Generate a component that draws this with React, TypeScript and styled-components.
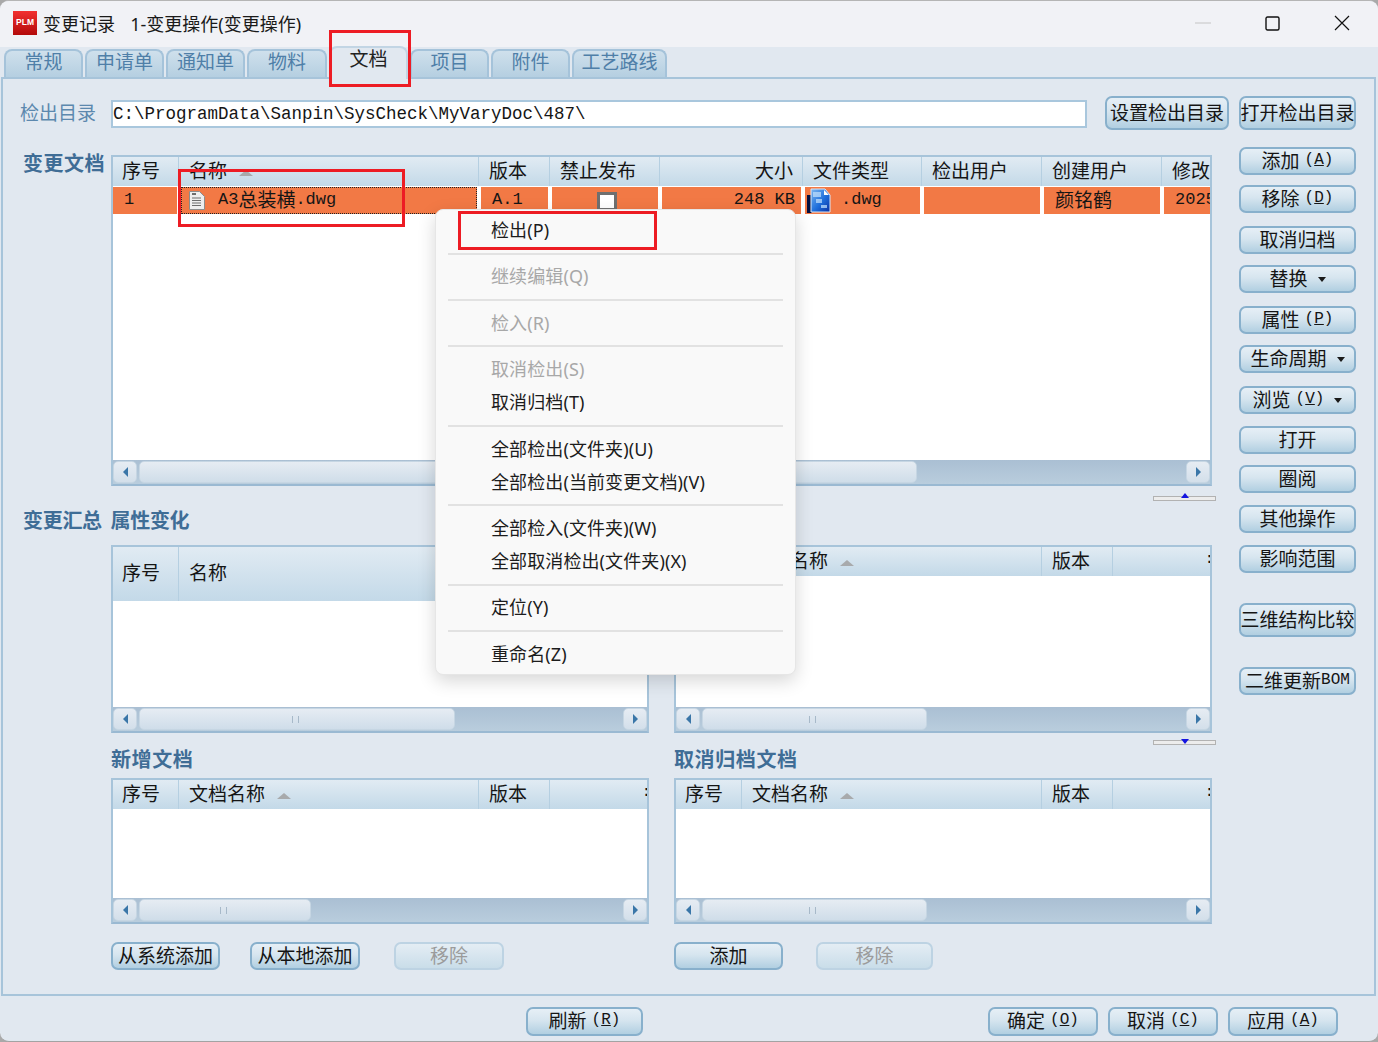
import React from "react";
import styled, { createGlobalStyle, css } from "styled-components";

const Global = createGlobalStyle`
  html, body { margin: 0; padding: 0; background: #a9a9a9; }
  * { box-sizing: border-box; }
  #root { width: 1378px; height: 1042px; overflow: hidden; }
`;

const UI = `"Liberation Mono", "Noto Sans CJK SC", monospace`;
const SANS = `"Noto Sans", "Noto Sans CJK SC", sans-serif`;

const Win = styled.div`
  position: relative;
  width: 1378px;
  height: 1042px;
  background: #e1e8f0;
  border-radius: 9px;
  border-top: 1px solid #b5b5b5;
  border-bottom: 1px solid #a3a3a3;
  overflow: hidden;
  font-family: ${UI};
  font-size: 19px;
  color: #151515;
`;

const TitleBar = styled.div`
  height: 46px;
  background: #f1f2f6;
  display: flex;
  align-items: center;
  padding: 0 0 2px 13px;
  font-family: ${SANS};
  font-size: 18px;
  color: #1a1a1a;
`;
const Logo = styled.div`
  width: 24px;
  height: 24px;
  background: linear-gradient(#f23030, #b30a0a);
  color: #fff;
  font-family: "Liberation Sans", sans-serif;
  font-weight: 700;
  font-size: 8.5px;
  line-height: 22px;
  text-align: center;
  margin-right: 6px;
`;
const TitleText = styled.span`
  white-space: pre;
  letter-spacing: 0;
  word-spacing: 0.4px;
`;
const WinControls = styled.div`
  margin-left: auto;
  display: flex;
  align-items: center;
  width: 183px;
  gap: 54px;
`;

const TabBar = styled.div`
  height: 30px;
  display: flex;
  align-items: flex-end;
  padding-left: 4px;
  gap: 2px;
`;
const Tab = styled.div<{ $w: number; $active?: boolean }>`
  width: ${(p) => p.$w}px;
  height: 28px;
  border: 2px solid #a5c3da;
  border-bottom: none;
  border-radius: 8px 8px 0 0;
  background: linear-gradient(#cfe0ec, #b5cfe1);
  color: #4f7fa8;
  text-align: center;
  line-height: 27px;
  ${(p) =>
    p.$active &&
    css`
      height: 33px;
      line-height: 27px;
      margin-bottom: -2px;
      background: #e1e8f0;
      border-color: #c2d5e4;
      color: #222;
      position: relative;
      z-index: 1;
    `}
`;

const Panel = styled.div`
  height: 919px;
  margin: 0 2px 0 1px;
  border: 2px solid #a7c4da;
  padding: 17px 0 0 17px;
  background: #e1e8f0;
`;
const DirRow = styled.div`
  display: flex;
  align-items: center;
  height: 34px;
`;
const DirLabel = styled.div`
  width: 91px;
  color: #5c88ae;
  padding-bottom: 2px;
`;
const DirInput = styled.div`
  width: 976px;
  height: 28px;
  margin: 1px 18px 0 0;
  background: #fff;
  border: 2px solid #a9c7dd;
  font-size: 17.5px;
  line-height: 24px;
  white-space: nowrap;
  overflow: hidden;
`;

const Body = styled.div`
  display: flex;
  margin-top: 17px;
`;
const LeftCol = styled.div`
  width: 1196px;
  display: flex;
  flex-direction: column;
`;
const RightCol = styled.div`
  margin-left: 23px;
  width: 117px;
  display: flex;
  flex-direction: column;
`;

const Btn = styled.div<{ $w?: number; $h?: number; $mt?: number; $off?: boolean; $ml?: number }>`
  flex: none;
  width: ${(p) => (p.$w ? `${p.$w}px` : "100%")};
  height: ${(p) => p.$h ?? 28}px;
  margin-top: ${(p) => p.$mt ?? 0}px;
  margin-left: ${(p) => p.$ml ?? 0}px;
  padding-bottom: 3px;
  border: 2px solid ${(p) => (p.$off ? "#bdd3e3" : "#88b0cc")};
  border-radius: 7px;
  background: ${(p) =>
    p.$off ? "linear-gradient(#e4edf4, #c9dde9)" : "linear-gradient(#e6eff6 0%, #d6e5ef 45%, #b1cfe1 100%)"};
  color: ${(p) => (p.$off ? "#9b9b9b" : "#151515")};
  display: flex;
  align-items: center;
  justify-content: center;
  white-space: nowrap;
  overflow: hidden;
`;
const Lat = styled.span<{ $s?: number }>`
  font-size: ${(p) => p.$s ?? 17}px;
`;
const BtnKey = styled.span`
  font-size: 16px;
  margin-left: 5px;
`;
const Caret = styled.span`
  display: inline-block;
  width: 0;
  height: 0;
  margin: 3px 0 0 10px;
  border: 4.5px solid transparent;
  border-top: 5px solid #1a1a1a;
  border-bottom: none;
`;

const SideLabel = styled.div`
  width: 91px;
  flex: none;
  padding-left: 3px;
  font-weight: 700;
  font-size: 20px;
  line-height: 22px;
  letter-spacing: 0.5px;
  color: #3f6d96;
  white-space: nowrap;
`;
const TopRow = styled.div`
  display: flex;
  margin-top: 8px;
`;
const Splitter = styled.div<{ $mt: number; $down?: boolean }>`
  position: relative;
  align-self: flex-end;
  width: 63px;
  height: 5px;
  margin-top: ${(p) => p.$mt}px;
  background: #ececec;
  border: 1px solid #b2b2b2;
  &::after {
    content: "";
    position: absolute;
    left: 27px;
    ${(p) =>
      p.$down
        ? css`
            top: -2px;
            border-top: 5px solid #1414e0;
          `
        : css`
            top: -4px;
            border-bottom: 5px solid #1414e0;
          `}
    border-left: 4px solid transparent;
    border-right: 4px solid transparent;
  }
`;
const HeadLine = styled.div`
  margin-top: 12px;
  height: 20px;
  line-height: 20px;
  padding-left: 3px;
  font-weight: 700;
  font-size: 20px;
  letter-spacing: -0.3px;
  word-spacing: -3px;
  color: #3f6d96;
`;
const PairRow = styled.div<{ $mt: number }>`
  display: flex;
  gap: 25px;
  margin-top: ${(p) => p.$mt}px;
  padding-left: 91px;
`;
const PairCol = styled.div`
  width: 538px;
  display: flex;
  flex-direction: column;
`;
const ColTitle = styled.div`
  height: 20px;
  line-height: 20px;
  font-weight: 700;
  font-size: 20px;
  letter-spacing: 0.6px;
  color: #3f6d96;
  margin-top: 7px;
  margin-bottom: 6px;
  white-space: nowrap;
`;
const BtnRow = styled.div`
  display: flex;
  margin-top: 18px;
`;

const TableBox = styled.div<{ $w: number; $h: number }>`
  width: ${(p) => p.$w}px;
  height: ${(p) => p.$h}px;
  flex: none;
  display: flex;
  flex-direction: column;
  background: #fff;
  border: 2px solid #a7c4da;
  border-bottom-color: #9ab9d2;
`;
const HeaderRow = styled.div<{ $cols: string; $h: number }>`
  flex: none;
  height: ${(p) => p.$h}px;
  display: grid;
  grid-template-columns: ${(p) => p.$cols};
  background: linear-gradient(#e1ebf3, #c3d9e8);
`;
const HeaderCell = styled.div<{ $right?: boolean }>`
  display: flex;
  align-items: center;
  justify-content: ${(p) => (p.$right ? "flex-end" : "flex-start")};
  padding: ${(p) => (p.$right ? "0 9px 4px 0" : "0 0 4px 10px")};
  border-right: 1px solid #b5cfe1;
  overflow: hidden;
  white-space: nowrap;
  &:first-child {
    padding-left: 9px;
  }
  &:last-child {
    border-right: none;
  }
`;
const SortMark = styled.span`
  width: 0;
  height: 0;
  margin-left: 12px;
  margin-top: 7px;
  border-left: 7px solid transparent;
  border-right: 7px solid transparent;
  border-bottom: 6px solid #a8aaac;
`;
const EndMark = styled.span`
  margin-left: auto;
  margin-right: -4px;
  font-size: 15px;
  font-weight: 700;
`;
const TableBody = styled.div`
  flex: 1;
  min-height: 0;
  background: #fff;
`;
const DataRow = styled.div<{ $cols: string }>`
  display: grid;
  grid-template-columns: ${(p) => p.$cols};
  height: 29px;
  padding-top: 1px;
`;
const DataCell = styled.div<{ $right?: boolean; $focus?: boolean }>`
  height: 27px;
  margin: 0 2px;
  background: #f27945;
  display: flex;
  align-items: center;
  justify-content: ${(p) => (p.$right ? "flex-end" : "flex-start")};
  padding: ${(p) => (p.$right ? "0 6px 3px 0" : "0 0 3px 11px")};
  overflow: hidden;
  white-space: nowrap;
  ${(p) =>
    p.$focus &&
    css`
      outline: 1px dotted #222;
      outline-offset: -1px;
    `}
  &:first-child {
    margin-left: 0;
  }
  &:last-child {
    margin-right: 0;
  }
`;
const CheckBox = styled.div`
  width: 20px;
  height: 19px;
  margin: 5px 0 0 34px;
  background: #fff;
  border: 3px solid #6f6f6f;
`;
const IconGap = styled.span<{ $w: number; $ml: number }>`
  display: inline-flex;
  flex: none;
  margin: 3px 0 0 ${(p) => p.$ml}px;
  width: ${(p) => p.$w}px;
`;

const ScrollBar = styled.div`
  flex: none;
  height: 24px;
  display: flex;
  padding: 1px 0;
  background: linear-gradient(#aabfd3, #b9cddd);
  align-items: stretch;
`;
const ScrollArrow = styled.div<{ $right?: boolean }>`
  width: 24px;
  flex: none;
  border: 1px solid #c6d6e3;
  border-radius: 5px;
  background: linear-gradient(#e6ecf3, #d3dfea);
  display: flex;
  align-items: center;
  justify-content: center;
  ${(p) => p.$right && "margin-left: auto;"}
  &::before {
    content: "";
    border-top: 5px solid transparent;
    border-bottom: 5px solid transparent;
    ${(p) => (p.$right ? "border-left: 5px solid #3a76a8;" : "border-right: 5px solid #3a76a8;")}
  }
`;
const ScrollThumb = styled.div<{ $w: number }>`
  width: ${(p) => p.$w}px;
  flex: none;
  margin-left: 2px;
  padding-right: 4px;
  border: 1px solid #c6d6e3;
  border-radius: 5px;
  background: linear-gradient(#e6ecf3, #cfdde9);
  display: flex;
  align-items: center;
  justify-content: center;
  &::before {
    content: "";
    width: 5px;
    height: 7px;
    border-left: 1px solid #a7b9c9;
    border-right: 1px solid #a7b9c9;
  }
`;

const Footer = styled.div`
  display: flex;
  padding: 11px 0 0 526px;
`;

const Menu = styled.div`
  position: absolute;
  left: 435px;
  top: 208px;
  width: 361px;
  height: 466px;
  padding-top: 4px;
  background: #f9f9f9;
  border: 1px solid #e6e6e6;
  border-radius: 8px;
  box-shadow: 0 6px 18px rgba(0, 0, 0, 0.16);
  z-index: 5;
  font-family: ${SANS};
  font-size: 18px;
  letter-spacing: 0.1px;
`;
const MenuItem = styled.div<{ $off?: boolean }>`
  height: 33px;
  line-height: 32px;
  padding-left: 55px;
  color: ${(p) => (p.$off ? "#a8a8a8" : "#1c1c1c")};
  white-space: nowrap;
`;
const MenuSep = styled.div`
  height: 2px;
  margin: 5.7px 12px;
  background: #e2e2e2;
`;
const RedMark = styled.div<{ $x: number; $y: number; $w: number; $h: number }>`
  position: absolute;
  left: ${(p) => p.$x}px;
  top: ${(p) => p.$y}px;
  width: ${(p) => p.$w}px;
  height: ${(p) => p.$h}px;
  border: 3px solid #ed1c24;
  z-index: 6;
  pointer-events: none;
`;

const TABS: [string, number, boolean?][] = [
  ["常规", 79],
  ["申请单", 79],
  ["通知单", 79],
  ["物料", 80],
  ["文档", 79, true],
  ["项目", 79],
  ["附件", 79],
  ["工艺路线", 95],
];

const Und = ({ c }: { c: string }) => (
  <BtnKey>
    (<u>{c}</u>)
  </BtnKey>
);

type Side = { n: React.ReactNode; mt: number; h?: number };
const SIDE: Side[] = [
  { n: <>添加<Und c="A" /></>, mt: 0 },
  { n: <>移除<Und c="D" /></>, mt: 10 },
  { n: <>取消归档</>, mt: 13 },
  { n: <>替换<Caret /></>, mt: 11 },
  { n: <>属性<Und c="P" /></>, mt: 13 },
  { n: <>生命周期<Caret /></>, mt: 11 },
  { n: <>浏览<Und c="V" /><Caret /></>, mt: 13 },
  { n: <>打开</>, mt: 12 },
  { n: <>圈阅</>, mt: 11 },
  { n: <>其他操作</>, mt: 12 },
  { n: <>影响范围</>, mt: 12 },
  { n: <>三维结构比较</>, mt: 30, h: 34 },
  { n: <>二维更新<Lat $s={16}>BOM</Lat></>, mt: 30 },
];

const DocIcon = () => (
  <svg width="18" height="21" viewBox="0 0 18 21">
    <path d="M1.5 1.5h10l5 5v13h-15z" fill="#eeeeee" stroke="#8d8d8d" />
    <path d="M4 8h9M4 10.5h9M4 13h9M4 15.5h9" stroke="#6d6d6d" />
    <path d="M4 4h4" stroke="#6d6d6d" strokeWidth="2" />
  </svg>
);
const FileTypeIcon = () => (
  <svg width="24" height="25" viewBox="0 0 24 25">
    <defs>
      <linearGradient id="dwgFill" x1="0" y1="0" x2="1" y2="1">
        <stop offset="0" stopColor="#7db8f0" />
        <stop offset="0.55" stopColor="#1f6fdc" />
        <stop offset="1" stopColor="#0a2fa0" />
      </linearGradient>
    </defs>
    <path d="M0 7h5v18H0z" fill="#041040" />
    <path d="M4 1h14l5 6v17H4z" fill="url(#dwgFill)" stroke="#dbe8f7" />
    <path d="M6 4h8v5H6zM9 11h6v4H9zM14 17h6v3h-6z" fill="#bcdcfb" opacity=".75" />
    <path d="M17 2l5 5h-5z" fill="#fff" />
  </svg>
);
const Minimize = () => (
  <svg width="16" height="2" viewBox="0 0 16 2"><path d="M0 1h16" stroke="#c4c4c4" /></svg>
);
const Maximize = () => (
  <svg width="15" height="15" viewBox="0 0 15 15">
    <rect x="1" y="1" width="13" height="13" rx="1.5" fill="none" stroke="#111" strokeWidth="1.4" />
  </svg>
);
const Close = () => (
  <svg width="16" height="16" viewBox="0 0 16 16"><path d="M1 1l14 14M15 1L1 15" stroke="#111" strokeWidth="1.2" /></svg>
);

const Bar = ({ thumb }: { thumb: number }) => (
  <ScrollBar>
    <ScrollArrow />
    <ScrollThumb $w={thumb} />
    <ScrollArrow $right />
  </ScrollBar>
);

const COLS1 = "66px 300px 71px 110px 143px 119px 120px 120px 48px";
const COLS_SMALL = "66px 300px 71px 1fr";

const SmallTable = ({
  thumb,
  h,
  head,
  prefix,
  noSort,
}: {
  thumb: number;
  h: number;
  head: number;
  prefix: string;
  noSort?: boolean;
}) => (
  <TableBox $w={538} $h={h}>
    <HeaderRow $cols={COLS_SMALL} $h={head}>
      <HeaderCell>序号</HeaderCell>
      <HeaderCell>
        {prefix}名称
        {!noSort && <SortMark />}
      </HeaderCell>
      <HeaderCell>版本</HeaderCell>
      <HeaderCell>
        <EndMark>:</EndMark>
      </HeaderCell>
    </HeaderRow>
    <TableBody />
    <Bar thumb={thumb} />
  </TableBox>
);

const MENU: (string | [string, boolean])[] = [
  "检出(P)",
  "-",
  ["继续编辑(Q)", true],
  "-",
  ["检入(R)", true],
  "-",
  ["取消检出(S)", true],
  "取消归档(T)",
  "-",
  "全部检出(文件夹)(U)",
  "全部检出(当前变更文档)(V)",
  "-",
  "全部检入(文件夹)(W)",
  "全部取消检出(文件夹)(X)",
  "-",
  "定位(Y)",
  "-",
  "重命名(Z)",
];

export default function App() {
  return (
    <Win>
      <Global />
      <TitleBar>
        <Logo>PLM</Logo>
        <TitleText>变更记录   1-变更操作(变更操作)</TitleText>
        <WinControls>
          <Minimize />
          <Maximize />
          <Close />
        </WinControls>
      </TitleBar>
      <TabBar>
        {TABS.map(([t, w, a]) => (
          <Tab key={t} $w={w} $active={a}>
            {t}
          </Tab>
        ))}
      </TabBar>
      <Panel>
        <DirRow>
          <DirLabel>检出目录</DirLabel>
          <DirInput>C:\ProgramData\Sanpin\SysCheck\MyVaryDoc\487\</DirInput>
          <Btn $w={124} $h={34}>设置检出目录</Btn>
          <Btn $w={117} $h={34} $ml={10}>打开检出目录</Btn>
        </DirRow>
        <Body>
          <LeftCol>
            <TopRow>
              <SideLabel>变更文档</SideLabel>
              <TableBox $w={1101} $h={331}>
                <HeaderRow $cols={COLS1} $h={29}>
                  <HeaderCell>序号</HeaderCell>
                  <HeaderCell>
                    名称
                    <SortMark />
                  </HeaderCell>
                  <HeaderCell>版本</HeaderCell>
                  <HeaderCell>禁止发布</HeaderCell>
                  <HeaderCell $right>大小</HeaderCell>
                  <HeaderCell>文件类型</HeaderCell>
                  <HeaderCell>检出用户</HeaderCell>
                  <HeaderCell>创建用户</HeaderCell>
                  <HeaderCell>修改</HeaderCell>
                </HeaderRow>
                <TableBody>
                  <DataRow $cols={COLS1}>
                    <DataCell><Lat>1</Lat></DataCell>
                    <DataCell $focus>
                      <IconGap $w={30} $ml={-4}><DocIcon /></IconGap>
                      <Lat>A3</Lat>总装横<Lat>.dwg</Lat>
                    </DataCell>
                    <DataCell><Lat>A.1</Lat></DataCell>
                    <DataCell><CheckBox /></DataCell>
                    <DataCell $right><Lat>248 KB</Lat></DataCell>
                    <DataCell>
                      <IconGap $w={34} $ml={-9}><FileTypeIcon /></IconGap>
                      <Lat>.dwg</Lat>
                    </DataCell>
                    <DataCell />
                    <DataCell>颜铭鹤</DataCell>
                    <DataCell><Lat>2025-03-18</Lat></DataCell>
                  </DataRow>
                </TableBody>
                <Bar thumb={778} />
              </TableBox>
            </TopRow>
            <Splitter $mt={10} />
            <HeadLine>变更汇总 属性变化</HeadLine>
            <PairRow $mt={12}>
              <SmallTable thumb={316} h={188} head={54} prefix="" noSort />
              <SmallTable thumb={225} h={188} head={29} prefix="文档" />
            </PairRow>
            <Splitter $mt={7} $down />
            <PairRow $mt={0}>
              <PairCol>
                <ColTitle>新增文档</ColTitle>
                <SmallTable thumb={172} h={146} head={29} prefix="文档" />
                <BtnRow>
                  <Btn $w={109}>从系统添加</Btn>
                  <Btn $w={110} $ml={30}>从本地添加</Btn>
                  <Btn $w={110} $ml={34} $off>移除</Btn>
                </BtnRow>
              </PairCol>
              <PairCol>
                <ColTitle>取消归档文档</ColTitle>
                <SmallTable thumb={225} h={146} head={29} prefix="文档" />
                <BtnRow>
                  <Btn $w={109}>添加</Btn>
                  <Btn $w={117} $ml={33} $off>移除</Btn>
                </BtnRow>
              </PairCol>
            </PairRow>
          </LeftCol>
          <RightCol>
            {SIDE.map((s, i) => (
              <Btn key={i} $mt={s.mt} $h={s.h}>
                {s.n}
              </Btn>
            ))}
          </RightCol>
        </Body>
      </Panel>
      <Footer>
        <Btn $w={117} $h={29}>刷新<Und c="R" /></Btn>
        <Btn $w={110} $h={29} $ml={345}>确定<Und c="O" /></Btn>
        <Btn $w={110} $h={29} $ml={10}>取消<Und c="C" /></Btn>
        <Btn $w={110} $h={29} $ml={10}>应用<Und c="A" /></Btn>
      </Footer>
      <Menu>
        {MENU.map((m, i) =>
          m === "-" ? (
            <MenuSep key={i} />
          ) : typeof m === "string" ? (
            <MenuItem key={i}>{m}</MenuItem>
          ) : (
            <MenuItem key={i} $off>{m[0]}</MenuItem>
          )
        )}
      </Menu>
      <RedMark $x={329} $y={29} $w={82} $h={57} />
      <RedMark $x={178} $y={168} $w={227} $h={58} />
      <RedMark $x={458} $y={210} $w={199} $h={39} />
    </Win>
  );
}
